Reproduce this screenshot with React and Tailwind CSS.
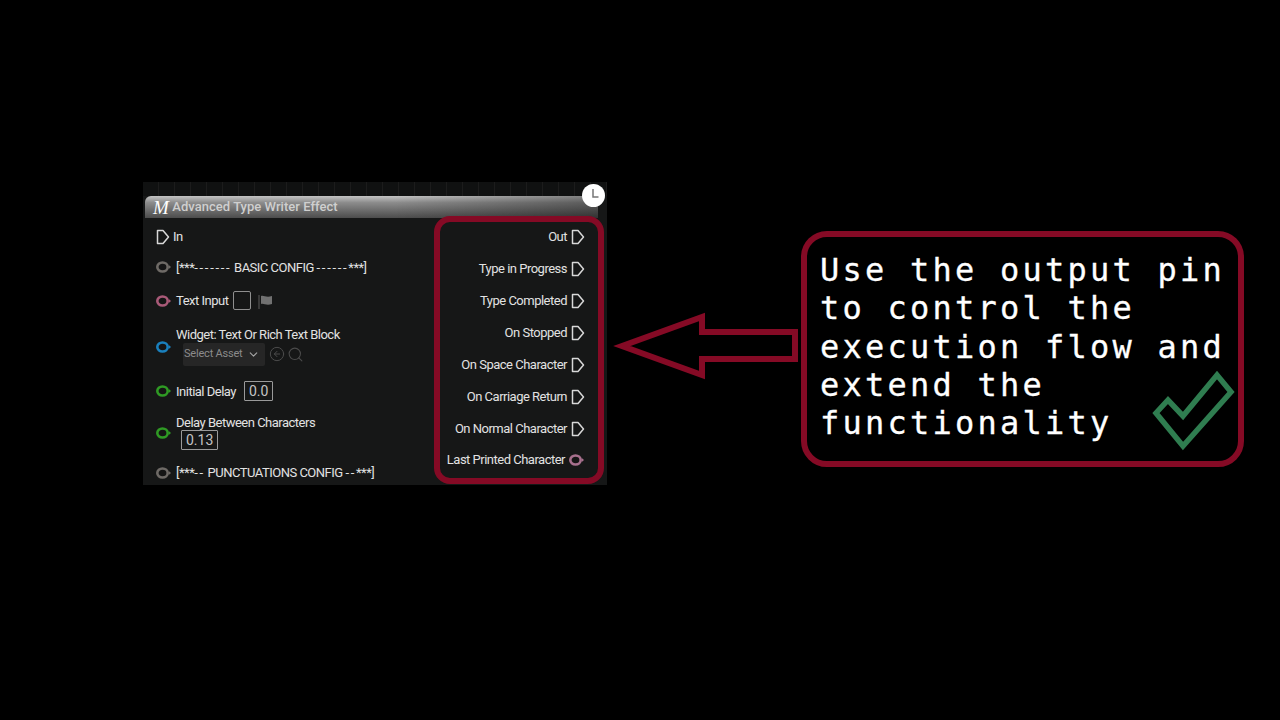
import { ChevronDown, Search, CircleArrowLeft } from 'lucide-react';

const RED = '#850a25';

const ExecPin = ({ color = '#d8d8d8' }) => (
    <svg width="14" height="16" viewBox="0 0 14 16" fill="none" className="shrink-0">
        <path d="M1.5 1.5 H7 L12.5 8 L7 14.5 H1.5 Z" stroke={color} strokeWidth="1.5" strokeLinejoin="round" />
    </svg>
);

const DataPin = ({ color }) => (
    <svg width="16" height="12" viewBox="0 0 16 12" fill="none" className="shrink-0">
        <ellipse cx="6.5" cy="6" rx="5.2" ry="4.5" stroke={color} strokeWidth="2.6" fill="#151515" />
        <path d="M12.8 4 L15 6 L12.8 8 Z" fill={color} />
    </svg>
);

const NumberBox = ({ value, className = '' }) => (
    <span className={`border border-[#9a9a9a] rounded-[1px] text-[#c4c4c4] text-[14px] tracking-normal leading-none py-[2px] ${className}`}>{value}</span>
);

const Dashes = ({ children }) => <span className="tracking-[1.7px]">{children}</span>;

const outputs = ['Type in Progress', 'Type Completed', 'On Stopped', 'On Space Character', 'On Carriage Return', 'On Normal Character'];

const NodeCard = () => (
    <div className="w-[464px] h-[303px] shrink-0 flex flex-col bg-[#161717] relative font-['Roboto',sans-serif] text-[#e2e2e2] text-[13px] tracking-[-0.5px] overflow-hidden">
        <div className="h-[14px] bg-[#101111] bg-[repeating-linear-gradient(90deg,transparent_0,transparent_15px,#1c1c1c_15px,#1c1c1c_16px)]" />
        <div className="h-[22px] ml-[2px] mr-[9px] rounded-t-[6px] bg-[linear-gradient(90deg,transparent_55%,rgba(0,0,0,0.35)_100%),linear-gradient(180deg,#c4c4c4_0%,#8c8c8c_30%,#4c4c4c_100%)] flex items-center pl-[8px] gap-[4px]">
            <span className="font-['Liberation_Serif',serif] italic text-[19px] leading-none text-white">M</span>
            <span className="font-medium text-[13px] tracking-[0.03px] text-[#cfcfcf]">Advanced Type Writer Effect</span>
        </div>
        <div className="flex-1 flex min-h-0">
            <div className="w-[291px] pl-[13px] flex flex-col">
                <div className="h-[38px] mt-[1px] flex items-center gap-[3px]">
                    <ExecPin />
                    <span>In</span>
                </div>
                <div className="h-[24px] mt-[1px] flex items-center gap-[4px]">
                    <DataPin color="#6e6a66" />
                    <span className="whitespace-nowrap">[***<Dashes>-------</Dashes> BASIC CONFIG <Dashes>------</Dashes>***]</span>
                </div>
                <div className="h-[42px] mt-[2px] flex items-center gap-[4px]">
                    <DataPin color="#a95a78" />
                    <span>Text Input</span>
                    <span className="w-[18px] h-[19px] ml-[1px] border border-[#8f8f8f] rounded-[2px]" />
                    <svg width="16" height="16" viewBox="0 0 16 16" className="ml-[3px] mt-[2px]">
                        <path d="M1 1 V15" stroke="#5c5c5c" strokeWidth="1" />
                        <path d="M3 2 C6 1 8 4 14 2 V10 C8 12 6 9 3 10 Z" fill="#717171" />
                    </svg>
                </div>
                <div className="h-[46px] mt-[4px] flex items-center gap-[4px]">
                    <DataPin color="#1a80bd" />
                    <div className="flex flex-col">
                        <span className="leading-[14px]">Widget: Text Or Rich Text Block</span>
                        <div className="flex items-center gap-[2px] mt-[1px]">
                            <div className="ml-[7px] w-[82px] h-[23px] bg-[#262626] rounded-[2px] flex items-center pl-[1px] text-[#8b8b8b] text-[11px] tracking-[-0.2px] gap-[4px]">
                                <span>Select Asset</span>
                                <ChevronDown size={13} className="text-[#a5a5a5]" />
                            </div>
                            <CircleArrowLeft size={16} strokeWidth={1.5} className="ml-[2px] text-[#4b4b4b]" />
                            <Search size={17} strokeWidth={1.5} className="text-[#4b4b4b]" />
                        </div>
                    </div>
                </div>
                <div className="h-[40px] mt-[4px] flex items-center gap-[4px]">
                    <DataPin color="#2f9a24" />
                    <span>Initial Delay</span>
                    <NumberBox value="0.0" className="ml-[4px] px-[4px]" />
                </div>
                <div className="h-[40px] mt-[4px] flex items-center gap-[4px]">
                    <DataPin color="#2f9a24" />
                    <div className="flex flex-col items-start">
                        <span className="leading-[14px]">Delay Between Characters</span>
                        <NumberBox value="0.13" className="ml-[5px] px-[4px]" />
                    </div>
                </div>
                <div className="h-[26px] mt-[8px] flex items-center gap-[4px]">
                    <DataPin color="#6e6a66" />
                    <span className="whitespace-nowrap">[***<Dashes>--</Dashes> PUNCTUATIONS CONFIG <Dashes>--</Dashes>***]</span>
                </div>
            </div>
            <div className="w-[170px] h-[268px] mt-[-2px] border-[6px] rounded-[16px] border-[#850a25] flex flex-col items-end pr-[13px]">
                <div className="h-[32px] -mt-[1px] shrink-0 flex items-center gap-[4px]">
                    <span>Out</span>
                    <ExecPin />
                </div>
                {outputs.map((label) => (
                    <div key={label} className="h-[32px] shrink-0 flex items-center gap-[4px]">
                        <span>{label}</span>
                        <ExecPin />
                    </div>
                ))}
                <div className="h-[30px] shrink-0 flex items-center gap-[4px]">
                    <span>Last Printed Character</span>
                    <DataPin color="#a7708d" />
                </div>
            </div>
        </div>
        <div className="absolute right-[2px] top-[2px] w-[23px] h-[23px] rounded-full bg-white">
            <svg width="23" height="23" viewBox="0 0 23 23" fill="none">
                <path d="M11 5 V13 H16.5" stroke="#777" strokeWidth="1.5" />
            </svg>
        </div>
    </div>
);

const Arrow = () => (
    <svg width="190" height="70" viewBox="0 0 190 70" fill="none" className="shrink-0 ml-[5px] mr-[-1px]">
        <path d="M10 35 L90 6 V21 H183 V48 H90 V64 Z" stroke={RED} strokeWidth="6" strokeLinejoin="miter" />
    </svg>
);

const Callout = () => (
    <div className="w-[443px] h-[236px] shrink-0 border-[6px] border-[#850a25] rounded-[26px] relative pl-[13px] pt-[14px] font-['DejaVu_Sans_Mono',monospace] text-white text-[32px] leading-[38.25px] tracking-[3.24px] whitespace-nowrap [-webkit-text-stroke:0.3px_white]">
        <div>Use the output pin</div>
        <div>to control the</div>
        <div>execution flow and</div>
        <div>extend the</div>
        <div>functionality</div>
        <svg width="86" height="82" viewBox="0 0 86 82" fill="none" className="absolute right-[2px] bottom-[9px]">
            <path d="M6 43 L18 30 L33 46 L67 5 L81 22 L33 76 Z" stroke="#2f7d50" strokeWidth="5.5" strokeLinejoin="miter" />
        </svg>
    </div>
);

export default function App() {
    return (
        <div className="w-[1280px] h-[720px] bg-black overflow-hidden flex pl-[143px] pt-[182px]">
            <NodeCard />
            <div className="flex items-start">
                <div className="mt-[129px]">
                    <Arrow />
                </div>
                <div className="mt-[49px]">
                    <Callout />
                </div>
            </div>
        </div>
    );
}
